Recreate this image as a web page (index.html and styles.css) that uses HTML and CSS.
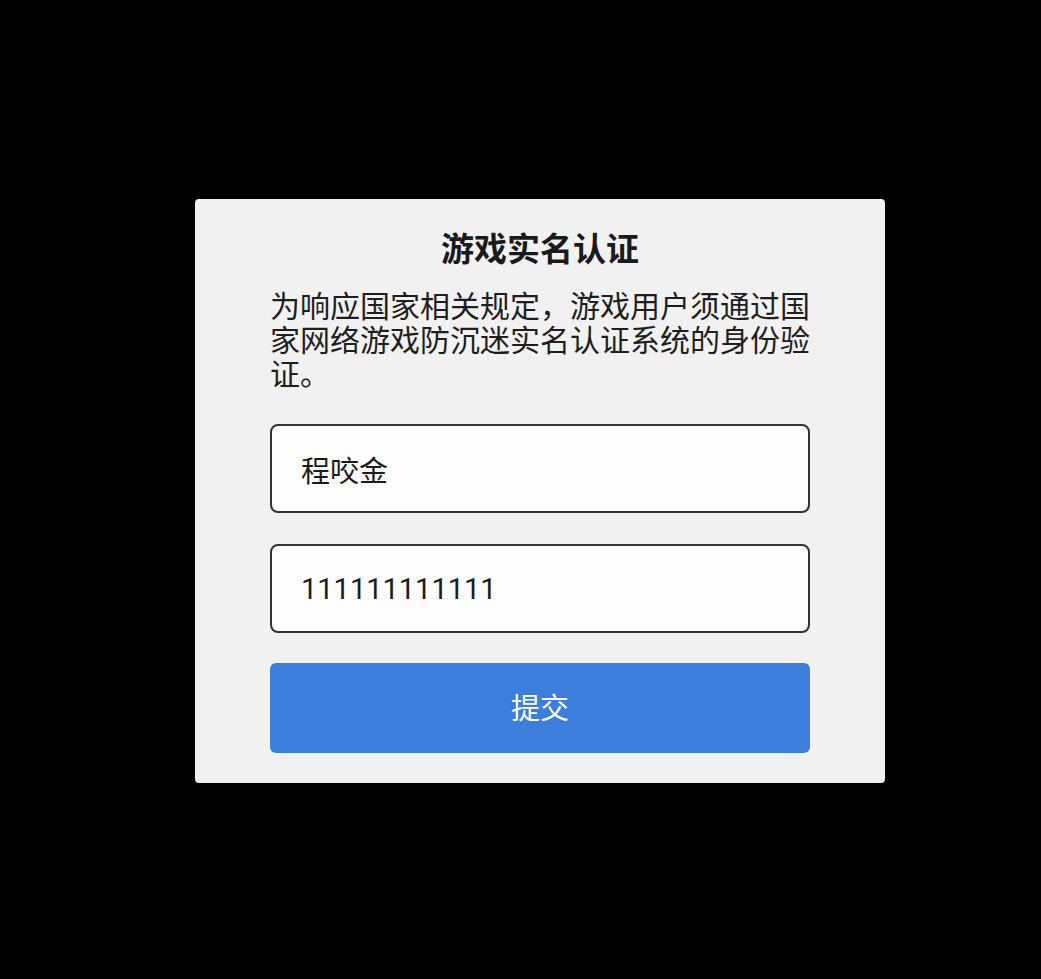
FILE: index.html
```html
<!DOCTYPE html>
<html lang="zh">
<head>
<meta charset="utf-8">
<title>游戏实名认证</title>
<link rel="stylesheet" href="styles.css">
</head>
<body>
<div class="stage">
  <form class="card" onsubmit="return false">
    <h1 class="title">游戏实名认证</h1>
    <p class="desc">为响应国家相关规定，游戏用户须通过国家网络游戏防沉迷实名认证系统的身份验证。</p>
    <input class="field" type="text" value="程咬金">
    <input class="field" type="text" value="111111111111">
    <button class="submit" type="button">提交</button>
  </form>
</div>
</body>
</html>
```

FILE: styles.css
```css
html, body {
  margin: 0;
  padding: 0;
  background: #000;
  height: 100%;
}
body {
  font-family: Roboto, "Noto Sans CJK SC", sans-serif;
  color: #1a1a1a;
}
.stage {
  padding: 199px 0 0 195px;
}
.card {
  box-sizing: border-box;
  width: 690px;
  background: #f1f1f1;
  border-radius: 4px;
  padding: 31px 75px 30px;
  display: flex;
  flex-direction: column;
}
.title {
  margin: 0;
  font-size: 33px;
  line-height: 39px;
  font-weight: 700;
  text-align: center;
  color: #1a1a1a;
}
.desc {
  margin: 21px 0 0;
  font-size: 30px;
  line-height: 34px;
  color: #1e1e1e;
}
.field {
  box-sizing: border-box;
  display: block;
  width: 540px;
  height: 89px;
  margin: 32px 0 0;
  padding: 0 29px;
  border: 2px solid #333;
  border-radius: 8px;
  background: #fdfdfd;
  font-family: Roboto, "Noto Sans CJK SC", sans-serif;
  font-size: 29px;
  color: #1c1c1c;
  outline: none;
}
.field + .field {
  margin-top: 31px;
}
.submit {
  box-sizing: border-box;
  display: block;
  width: 540px;
  height: 90px;
  margin: 30px 0 0;
  padding: 0 0 5px;
  border: 0;
  border-radius: 6px;
  background: #3d7ddb;
  color: #fff;
  font-family: Roboto, "Noto Sans CJK SC", sans-serif;
  font-size: 29px;
}
```
